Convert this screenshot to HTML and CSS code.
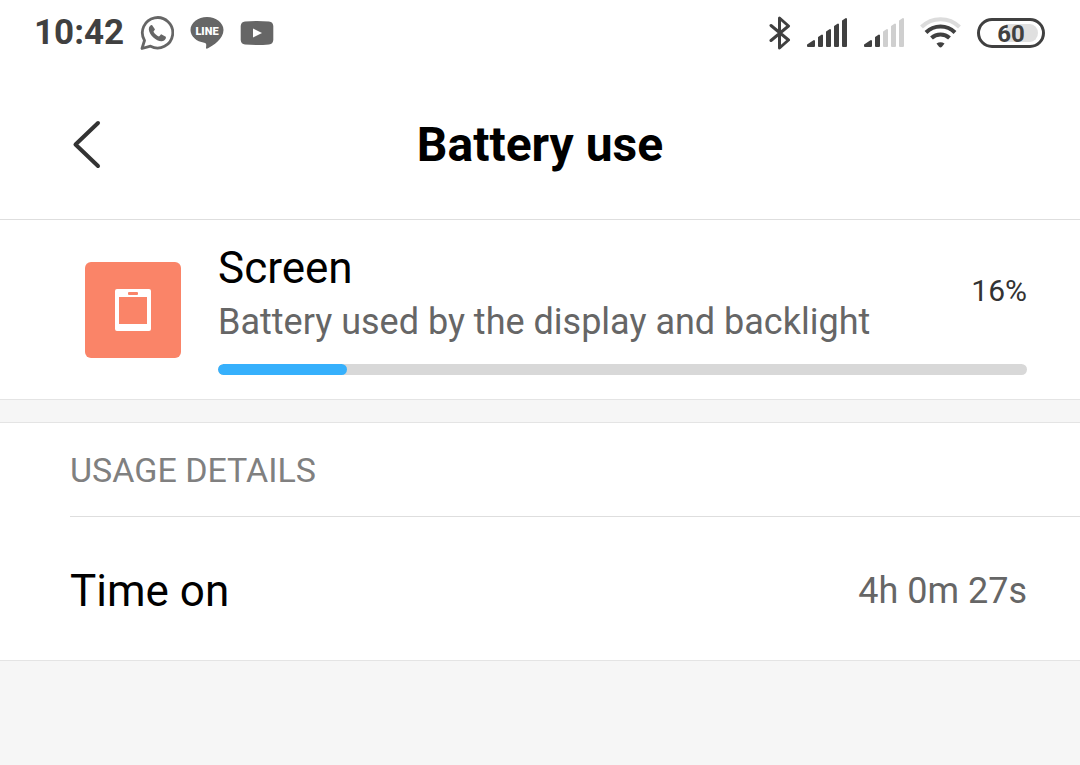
FILE: index.html
```html
<!DOCTYPE html>
<html lang="en">
<head>
    <meta charset="UTF-8">
    <meta name="viewport" content="width=device-width, initial-scale=1.0">
    <title>Battery use</title>
    <link rel="stylesheet" href="styles.css">
</head>
<body>
    <div class="status-bar">
        <div class="status-left">
            <span class="clock">10:42</span>
            <!-- WhatsApp -->
            <svg width="34" height="34" viewBox="0 0 34 34">
                <path d="M2 32.500 L4.500 24.500 A15.200 15.200 0 1 1 10.500 30.200 Z" fill="none" stroke="#666" stroke-width="2.800" stroke-linejoin="round"/>
                <path d="M12 9 C10.800 8.800 8.600 10.400 8.800 13.600 C9.300 19.400 17 25.800 21.800 25.300 C24.600 25 26.400 22.600 25.800 20.800 L21.200 18.300 C20.200 18.900 19.800 20.500 18.900 20.400 C16.900 19.700 14.400 17.600 13.500 15.700 C13.500 14.900 15 14.200 14.900 13.200 Z" fill="#666"/>
            </svg>
            <!-- LINE -->
            <svg width="34" height="34" viewBox="0 0 34 34">
                <path d="M17 1 C8 1 0.500 6.700 0.500 14 C0.500 20.500 6.500 25.600 14.200 26.700 C16.600 27.200 16.400 28.500 16 32 C16 33 17 33 18 32.300 C23 29.500 33.500 23 33.500 14 C33.500 6.700 26 1 17 1 Z" fill="#666"/>
                <text x="17" y="19" class="line-text">LINE</text>
            </svg>
            <!-- YouTube -->
            <svg width="34" height="34" viewBox="0 0 34 34">
                <path d="M5 5.500 Q17 4.500 29 5.500 Q33 5.800 33.300 10 V24 Q33 28.200 29 28.500 Q17 29.500 5 28.500 Q1 28.200 0.700 24 V10 Q1 5.800 5 5.500 Z" fill="#666"/>
                <path d="M13 12.500 L22 17 L13 21.500 Z" fill="#fff"/>
            </svg>
        </div>
        <div class="status-right">
            <!-- Bluetooth -->
            <svg width="22" height="34" viewBox="0 0 22 34">
                <path d="M2 9.500 L19.500 24 L10.500 32 V2 L19.500 10 L2 24.500" fill="none" stroke="#404040" stroke-width="3" stroke-linecap="round" stroke-linejoin="round"/>
            </svg>
            <!-- Mobile signal, first SIM -->
            <svg width="42" height="34" viewBox="0 0 42 34">
                <g fill="#404040" stroke="#404040" stroke-width="2" stroke-linejoin="round">
                    <path d="M2 29 L8 25 V30 H2 Z"/>
                    <path d="M13 21.500 L16 19.500 V30 H13 Z"/>
                    <path d="M21 16 L24 14 V30 H21 Z"/>
                    <path d="M29 10.500 L32 8.500 V30 H29 Z"/>
                    <path d="M37 5 L40 3 V30 H37 Z"/>
                </g>
            </svg>
            <!-- Mobile signal, second SIM -->
            <svg width="42" height="34" viewBox="0 0 42 34">
                <g fill="#404040" stroke="#404040" stroke-width="2" stroke-linejoin="round">
                    <path d="M2 29 L8 25 V30 H2 Z"/>
                    <path d="M13 21.500 L16 19.500 V30 H13 Z"/>
                </g>
                <g fill="#cfcfcf" stroke="#cfcfcf" stroke-width="2" stroke-linejoin="round">
                    <path d="M21 16 L24 14 V30 H21 Z"/>
                    <path d="M29 10.500 L32 8.500 V30 H29 Z"/>
                    <path d="M37 5 L40 3 V30 H37 Z"/>
                </g>
            </svg>
            <!-- Wi-Fi -->
            <svg width="42" height="34" viewBox="0 0 42 34">
                <path d="M1.500 11 A27 27 0 0 1 39.500 11" fill="none" stroke="#dcdcdc" stroke-width="4"/>
                <g fill="none" stroke="#404040" stroke-width="4">
                    <path d="M6 16.500 A20.500 20.500 0 0 1 35 16.500"/>
                    <path d="M11.500 22 A13 13 0 0 1 29.500 22"/>
                </g>
                <path d="M16.500 27.500 A6.500 5.500 0 0 1 24.500 27.500 L22 30.800 Q20.500 32 19 30.800 Z" fill="#404040"/>
            </svg>
            <div class="battery">60</div>
        </div>
    </div>

    <header class="title-bar">
        <button type="button" class="back" aria-label="Back">
            <svg width="32" height="52" viewBox="0 0 32 52">
                <path d="M28 4 L5.500 25.500 L28 47" fill="none" stroke="#333" stroke-width="4" stroke-linecap="round" stroke-linejoin="round"/>
            </svg>
        </button>
        <h1>Battery use</h1>
    </header>

    <main>
        <section class="app">
            <div class="app-icon">
                <svg width="36" height="42" viewBox="0 0 36 42">
                    <path fill-rule="evenodd" d="M2 0 H34 Q36 0 36 2 V40 Q36 42 34 42 H2 Q0 42 0 40 V2 Q0 0 2 0 Z M4 8 V35 H32 V8 Z" fill="#fff"/>
                    <rect x="13" y="3" width="10" height="3" rx="1" fill="#fa8468"/>
                </svg>
            </div>
            <div class="app-info">
                <div class="app-text">
                    <div>
                        <h2>Screen</h2>
                        <p><label for="usage">Battery used by the display and backlight</label></p>
                    </div>
                    <span class="percent">16%</span>
                </div>
                <progress id="usage" value="16" max="100"></progress>
            </div>
        </section>

        <section class="details">
            <h3>USAGE DETAILS</h3>
            <dl class="row">
                <dt>Time on</dt>
                <dd>4h 0m 27s</dd>
            </dl>
        </section>
    </main>
</body>
</html>
```
FILE: styles.css
```css
* {
    box-sizing: border-box;
}
body {
    margin: 0;
    background-color: #f6f6f6;
    color: #000;
    font-family: Roboto, sans-serif;
}
h1, h2, h3, p, dl, dd {
    margin: 0;
    font-weight: normal;
}
svg {
    display: block;
}
.status-bar {
    display: flex;
    justify-content: space-between;
    height: 66px;
    padding: 0 35px 0 34px;
    background-color: #fff;
}
.status-left, .status-right {
    display: flex;
    align-items: center;
    gap: 16px;
}
.status-right {
    gap: 15px;
}
.clock {
    color: #404040;
    font-size: 35px;
    font-weight: bold;
    line-height: 44px;
}
.line-text {
    fill: #fff;
    font-size: 11px;
    font-weight: 900;
    text-anchor: middle;
}
.battery {
    width: 68px;
    height: 30px;
    border: 3px solid #404040;
    border-radius: 15px;
    padding: 3px 4px;
    background: linear-gradient(to right, #fff 40%, #e0e0e0 40%) content-box;
    color: #404040;
    font-size: 24px;
    font-weight: bold;
    line-height: 20px;
    text-align: center;
}
.title-bar {
    display: grid;
    grid-template-columns: 32px 1fr 32px;
    align-items: center;
    height: 154px;
    padding: 4px 70px 0;
    border-bottom: 1px solid #dedede;
    background-color: #fff;
}
.back {
    padding: 0;
    border: none;
    background: none;
    cursor: pointer;
}
h1 {
    font-size: 48px;
    font-weight: bold;
    text-align: center;
}
.app {
    display: flex;
    align-items: center;
    gap: 37px;
    height: 180px;
    padding: 0 53px 0 85px;
    border-bottom: 1px solid #e4e4e4;
    background-color: #fff;
}
.app-icon {
    display: flex;
    align-items: center;
    justify-content: center;
    width: 96px;
    height: 96px;
    border-radius: 6px;
    background-color: #fa8468;
}
.app-info {
    flex: 1;
    padding-bottom: 3px;
}
.app-text {
    display: flex;
    justify-content: space-between;
    align-items: center;
}
h2, dt {
    font-size: 44px;
    line-height: 54px;
}
.app-text p {
    color: #666;
    font-size: 36px;
    line-height: 54px;
}
.percent {
    padding-bottom: 10px;
    color: #333;
    font-size: 30px;
}
progress {
    display: block;
    width: 100%;
    height: 11px;
    margin-top: 15px;
    border: none;
    appearance: none;
}
progress::-webkit-progress-bar {
    border-radius: 6px;
    background-color: #d8d8d8;
    overflow: hidden;
}
progress::-webkit-progress-value {
    border-radius: 6px;
    background-color: #36b0fc;
}
.details {
    margin-top: 22px;
    padding-left: 70px;
    border-top: 1px solid #e4e4e4;
    border-bottom: 1px solid #e4e4e4;
    background-color: #fff;
}
h3 {
    padding-top: 2px;
    border-bottom: 1px solid #dedede;
    color: #808080;
    font-size: 34px;
    line-height: 91px;
}
.row {
    display: flex;
    justify-content: space-between;
    align-items: center;
    height: 143px;
    padding: 4px 53px 0 0;
}
dd {
    color: #666;
    font-size: 36px;
}
```
